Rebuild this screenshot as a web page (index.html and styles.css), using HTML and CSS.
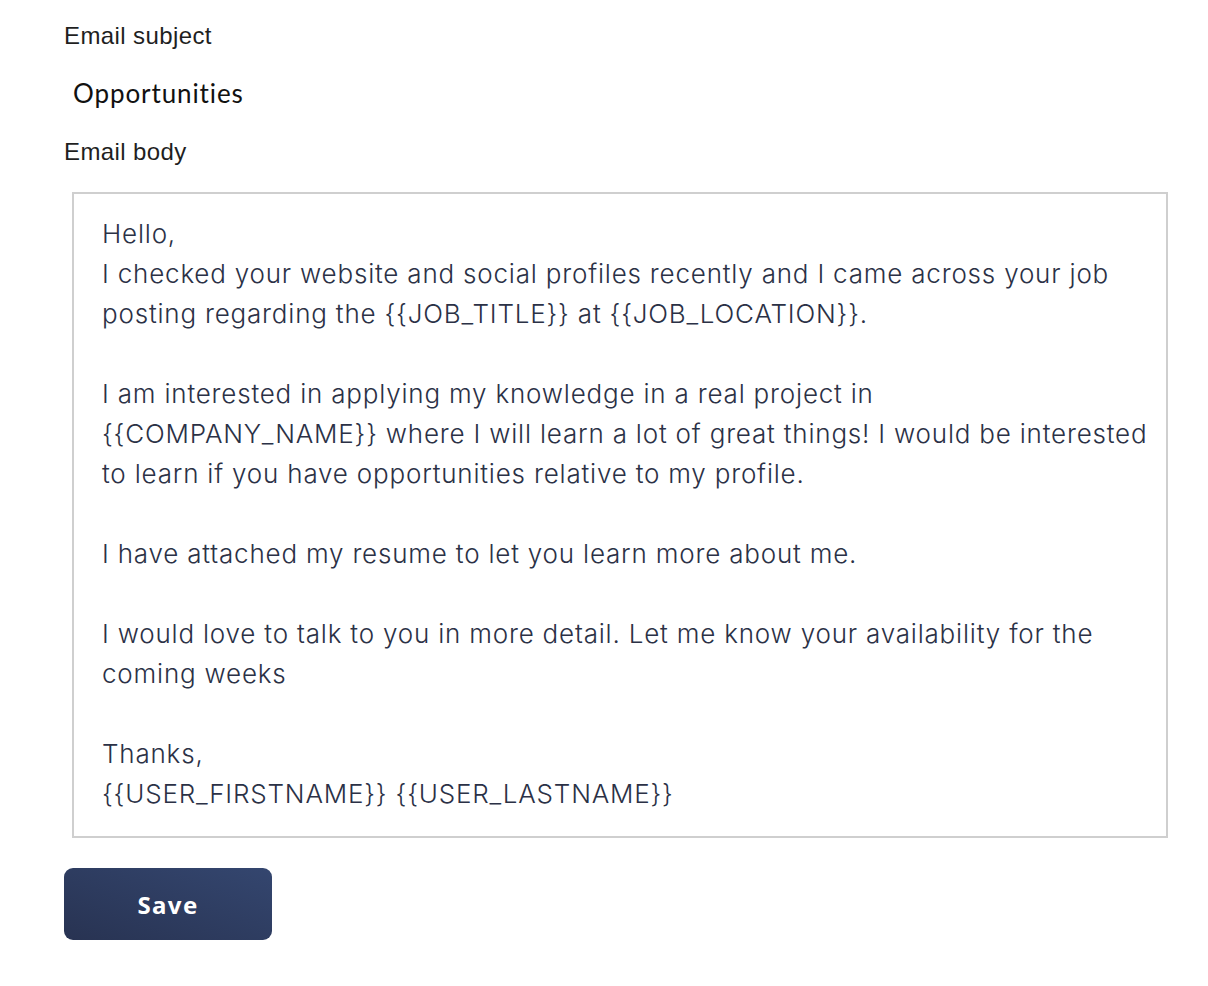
FILE: index.html
```html
<!DOCTYPE html>
<html>
<head>
<meta charset="utf-8">
<link rel="stylesheet" href="styles.css">
</head>
<body>
<div class="form">
  <label class="label">Email subject</label>
  <div class="subject">Opportunities</div>
  <label class="label label-body">Email body</label>
  <div class="body-box">
    <p>Hello,<br>I checked your website and social profiles recently and I came across your job<br>posting regarding the {{JOB_TITLE}} at {{JOB_LOCATION}}.</p>
    <p>I am interested in applying my knowledge in a real project in<br>{{COMPANY_NAME}} where I will learn a lot of great things! I would be interested<br>to learn if you have opportunities relative to my profile.</p>
    <p>I have attached my resume to let you learn more about me.</p>
    <p>I would love to talk to you in more detail. Let me know your availability for the<br>coming weeks</p>
    <p class="sign">Thanks,<br>{{USER_FIRSTNAME}} {{USER_LASTNAME}}</p>
  </div>
  <button class="save">Save</button>
</div>
</body>
</html>
```
FILE: styles.css
```css
html, body {
  margin: 0;
  padding: 0;
  background: #fff;
}
.form {
  display: flex;
  flex-direction: column;
  align-items: flex-start;
  padding: 22px 40px 0 64px;
}
.label {
  font-family: "Liberation Sans", Arial, sans-serif;
  font-size: 24px;
  letter-spacing: 0.4px;
  color: #1f1f1f;
  line-height: 28px;
}
.subject {
  font-family: "Lato", "Noto Sans", sans-serif;
  font-size: 26px;
  letter-spacing: 0.9px;
  color: #111;
  line-height: 32px;
  margin: 27px 0 0 9px;
}
.label-body {
  margin-top: 29px;
}
.body-box {
  box-sizing: border-box;
  width: 1096px;
  margin: 26px 0 0 8px;
  border: 2px solid #cfcfcf;
  padding: 20px 28px 22px 28px;
  font-family: "Inter", "Liberation Sans", sans-serif;
  font-weight: 300;
  font-size: 26px;
  letter-spacing: 0.8px;
  line-height: 40px;
  color: #2b3146;
  white-space: nowrap;
}
.body-box p {
  margin: 0 0 40px 0;
}
.body-box p.sign {
  margin: 0;
}
.save {
  margin-top: 30px;
  width: 208px;
  height: 72px;
  border: none;
  border-radius: 9px;
  background: linear-gradient(20deg, #283352 0%, #34466f 100%);
  color: #fff;
  font-family: "Noto Sans", "Lato", sans-serif;
  font-weight: 700;
  font-size: 24px;
  letter-spacing: 1.4px;
}
```
